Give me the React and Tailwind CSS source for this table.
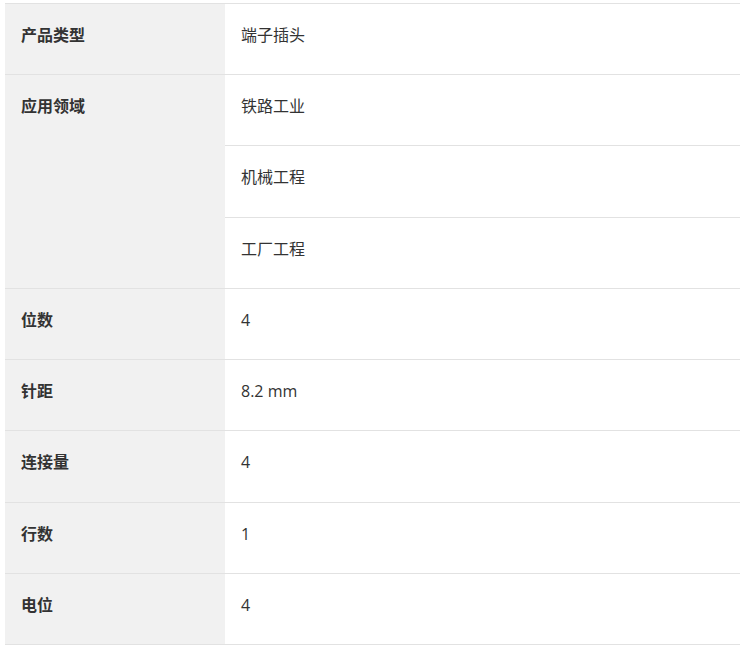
import React from 'react';

const rows = [
  { label: '产品类型', values: ['端子插头'] },
  { label: '应用领域', values: ['铁路工业', '机械工程', '工厂工程'] },
  { label: '位数', values: ['4'] },
  { label: '针距', values: ['8.2 mm'] },
  { label: '连接量', values: ['4'] },
  { label: '行数', values: ['1'] },
  { label: '电位', values: ['4'] },
];

const font = { fontFamily: '"Open Sans", "Noto Sans CJK SC", sans-serif' };

export default function App() {
  return (
    <div className="bg-white pt-[3px] pl-[5px] w-[744px] h-[648px]" style={font}>
      <table className="w-[735px] border-collapse border-b border-[#e2e2e2] text-[16px] leading-[24.22px] text-[#333]">
        <tbody>
          {rows.map((row) =>
            row.values.map((value, i) => (
              <tr key={row.label + i} className="border-t border-[#e2e2e2]">
                {i === 0 && (
                  <th
                    rowSpan={row.values.length}
                    className="w-[220px] bg-[#f1f1f1] px-4 pt-[19px] pb-[27px] text-left align-top font-bold"
                  >
                    {row.label}
                  </th>
                )}
                <td className="px-4 pt-[19px] pb-[27px] align-top">{value}</td>
              </tr>
            ))
          )}
        </tbody>
      </table>
    </div>
  );
}
